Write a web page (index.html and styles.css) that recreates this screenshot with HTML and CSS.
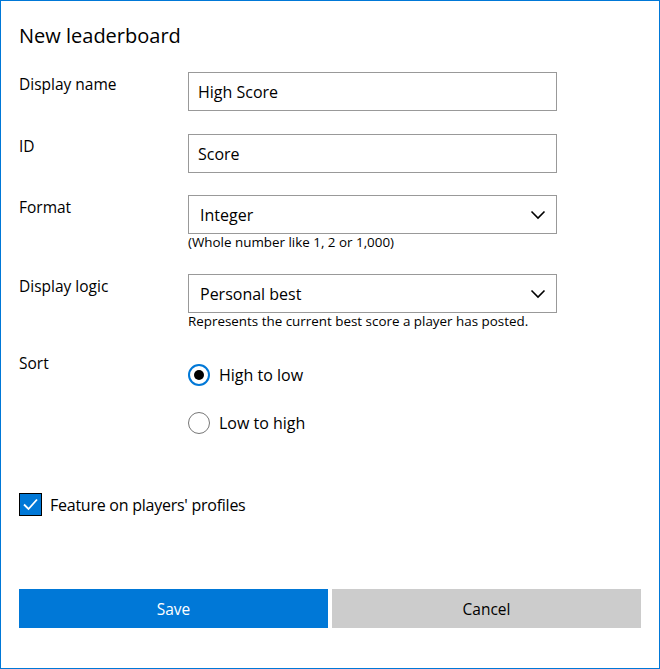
FILE: index.html
```html
<!DOCTYPE html>
<html>
<head>
<meta charset="utf-8">
<link rel="stylesheet" href="styles.css">
</head>
<body>
<div class="dialog">
  <h1 class="title">New leaderboard</h1>
  <div class="row r1">
    <div class="label">Display name</div>
    <div class="field"><div class="input">High Score</div></div>
  </div>
  <div class="row r2">
    <div class="label">ID</div>
    <div class="field"><div class="input">Score</div></div>
  </div>
  <div class="row r3">
    <div class="label">Format</div>
    <div class="field">
      <div class="select"><span>Integer</span>
        <svg class="chev" width="16" height="10" viewBox="0 0 16 10"><path d="M1.5 1.5 L8 8 L14.5 1.5" fill="none" stroke="#000" stroke-width="1.6"/></svg>
      </div>
      <div class="help">(Whole number like 1, 2 or 1,000)</div>
    </div>
  </div>
  <div class="row r4">
    <div class="label">Display logic</div>
    <div class="field">
      <div class="select"><span>Personal best</span>
        <svg class="chev" width="16" height="10" viewBox="0 0 16 10"><path d="M1.5 1.5 L8 8 L14.5 1.5" fill="none" stroke="#000" stroke-width="1.6"/></svg>
      </div>
      <div class="help">Represents the current best score a player has posted.</div>
    </div>
  </div>
  <div class="row r5">
    <div class="label sortlabel">Sort</div>
    <div class="radios">
      <div class="radio-row"><span class="radio on"><span class="dot"></span></span><span>High to low</span></div>
      <div class="radio-row"><span class="radio"></span><span>Low to high</span></div>
    </div>
  </div>
  <div class="check-row">
    <span class="check"><svg width="21" height="21" viewBox="0 0 21 21"><path d="M4 10.5 L8.5 15 L17 5.5" fill="none" stroke="#fff" stroke-width="1.8"/></svg></span>
    <span class="check-label">Feature on players' profiles</span>
  </div>
  <div class="buttons">
    <div class="btn save">Save</div>
    <div class="btn cancel">Cancel</div>
  </div>
</div>
</body>
</html>
```

FILE: styles.css
```css
html, body {
  margin: 0;
  padding: 0;
  background: #fff;
}
body {
  font-family: "Open Sans", "Noto Sans", sans-serif;
  color: #000;
}
.dialog {
  width: 660px;
  height: 669px;
  box-sizing: border-box;
  border: 1px solid #0078d7;
  padding: 0 18px;
  display: flex;
  flex-direction: column;
}
.title {
  margin: 21px 0 0 0;
  font-size: 20px;
  font-weight: 400;
  line-height: 28px;
}
.row {
  display: grid;
  grid-template-columns: 169px 369px;
}
.r1 { margin-top: 22px; }
.r2 { margin-top: 23px; }
.r3 { margin-top: 22px; }
.r4 { margin-top: 23px; }
.r5 { margin-top: 22px; }
.label {
  font-size: 15.5px;
  line-height: 22px;
  padding-top: 1px;
}
.input, .select {
  height: 39px;
  box-sizing: border-box;
  border: 1px solid #999;
  font-size: 16px;
  display: flex;
  align-items: center;
}
.input { padding-left: 9px; }
.select {
  padding-left: 11px;
  padding-right: 10px;
  justify-content: space-between;
}
.chev { display: block; }
.help {
  font-size: 13.4px;
  line-height: 17px;
  color: #000;
}
.sortlabel { padding-top: 0; }
.radios {
  display: flex;
  flex-direction: column;
}
.radio-row {
  height: 48px;
  display: flex;
  align-items: center;
  gap: 9px;
  font-size: 16px;
}
.radio-row:first-child { margin-top: -1px; }
.radio {
  width: 22px;
  height: 22px;
  box-sizing: border-box;
  border: 1px solid #777;
  border-radius: 50%;
  display: flex;
  align-items: center;
  justify-content: center;
}
.radio.on {
  border: 2px solid #0078d7;
}
.dot {
  width: 10px;
  height: 10px;
  border-radius: 50%;
  background: #000;
}
.check-row {
  margin-top: 46px;
  display: flex;
  align-items: center;
  gap: 8px;
  font-size: 16px;
}
.check-label { letter-spacing: -0.25px; }
.check {
  width: 23px;
  height: 23px;
  box-sizing: border-box;
  background: #0078d7;
  border: 1px solid #000;
  display: flex;
  align-items: center;
  justify-content: center;
}
.check svg { display: block; }
.buttons {
  margin-top: 73px;
  display: flex;
  gap: 4px;
}
.btn {
  width: 309px;
  height: 39px;
  display: flex;
  align-items: center;
  justify-content: center;
  font-size: 15.5px;
}
.save { background: #0078d7; color: #fff; }
.cancel { background: #ccc; color: #000; }
```
